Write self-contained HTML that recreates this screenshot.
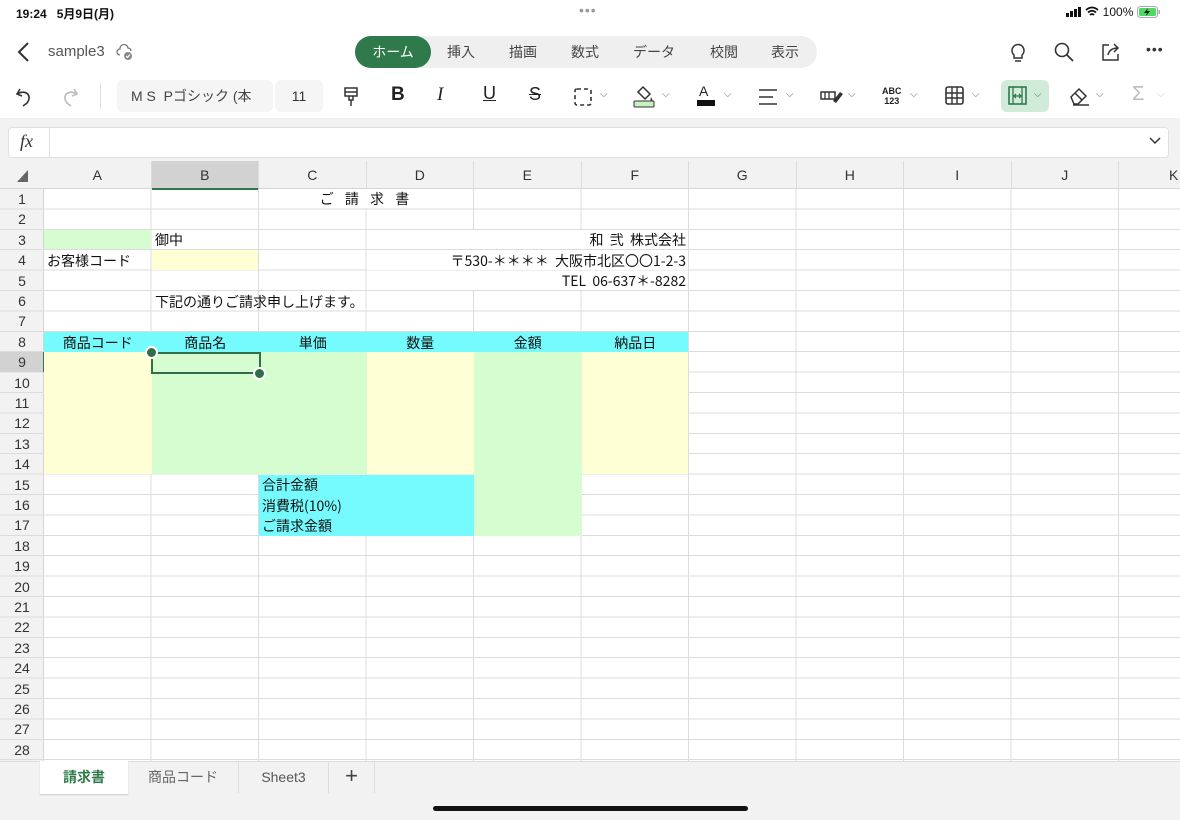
<!DOCTYPE html>
<html><head><meta charset="utf-8">
<style>
*{box-sizing:border-box;margin:0;padding:0}
body{width:1180px;height:820px;overflow:hidden;background:#fff;font-family:"Liberation Sans","Noto Sans CJK JP",sans-serif;position:relative;color:#222}
.a{position:absolute}
.tb{color:#444;font-size:14px}
.ic{position:absolute;top:80px}
.chev{position:absolute;font-size:10px;color:#666}
.cell{position:absolute;font-size:14px;line-height:20px;white-space:nowrap;color:#111;font-family:"Noto Sans CJK JP","Liberation Sans",sans-serif}
.rh{position:absolute;left:0;width:44px;font-size:14px;text-align:center;color:#333;line-height:20px}
.ch{position:absolute;top:161px;height:28px;line-height:28px;width:107.5px;text-align:center;font-size:14px;color:#333;border-right:1px solid #dcdcdc}
</style></head><body>
<!-- status bar -->
<div class="a" style="left:16px;top:5px;font-size:12px;font-weight:bold;color:#111">19:24&nbsp;&nbsp;&nbsp;5月9日(月)</div>
<div class="a" style="left:579px;top:2px;font-size:14px;color:#999;letter-spacing:1px">•••</div>
<div class="a" style="left:1066px;top:5px;font-size:12px;color:#111">
<svg width="16" height="10" style="vertical-align:-1px"><rect x="0" y="6" width="3" height="4" fill="#111"/><rect x="4" y="4" width="3" height="6" fill="#111"/><rect x="8" y="2" width="3" height="8" fill="#111"/><rect x="12" y="0" width="3" height="10" fill="#111"/></svg>
<svg width="14" height="11" style="vertical-align:-1px"><path d="M1 4Q7-1 13 4M3 6.5Q7 3 11 6.5M5 9Q7 7 9 9" stroke="#111" stroke-width="1.8" fill="none"/></svg>
100%
<svg width="24" height="12" style="vertical-align:-2px"><rect x="0.5" y="0.5" width="20" height="11" rx="3" fill="none" stroke="#aaa"/><rect x="2" y="2" width="17" height="8" rx="1.5" fill="#4cd964"/><rect x="21.5" y="4" width="1.5" height="4" fill="#aaa"/><path d="M11 2L7 7h3l-1 3 4-5h-3z" fill="#111"/></svg></div>
<!-- title row -->
<svg class="a" style="left:16px;top:41px" width="14" height="22"><path d="M12 2L3 11l9 9" stroke="#333" stroke-width="2" fill="none"/></svg>
<div class="a" style="left:48px;top:43px;font-size:15px;color:#555">sample3</div>
<svg class="a" style="left:116px;top:43px" width="18" height="18"><path d="M4 12a3 3 0 0 1 0-6 4 4 0 0 1 8-1 3 3 0 0 1 3 3" stroke="#777" stroke-width="1.3" fill="none"/><circle cx="12" cy="13" r="4" fill="#888"/><path d="M10 13l1.5 1.5 2.5-3" stroke="#fff" stroke-width="1.2" fill="none"/></svg>
<div class="a" style="left:355px;top:36px;width:462px;height:32px;border-radius:16px;background:#efefef"></div>
<div class="a" style="left:355px;top:36px;width:76px;height:32px;border-radius:16px;background:#2f7a4b;color:#fff;font-size:14px;text-align:center;line-height:32px">ホーム</div>
<div class="a tb" style="top:42px;left:447px">挿入</div>
<div class="a tb" style="top:42px;left:509px">描画</div>
<div class="a tb" style="top:42px;left:571px">数式</div>
<div class="a tb" style="top:42px;left:633px">データ</div>
<div class="a tb" style="top:42px;left:710px">校閲</div>
<div class="a tb" style="top:42px;left:771px">表示</div>
<svg class="a" style="left:1008px;top:40px" width="20" height="24"><path d="M6 15a6 6 0 1 1 8 0v3H6z" stroke="#333" stroke-width="1.5" fill="none"/><path d="M7 21h6" stroke="#333" stroke-width="1.5"/></svg>
<svg class="a" style="left:1053px;top:41px" width="22" height="22"><circle cx="9" cy="9" r="6.5" stroke="#333" stroke-width="1.6" fill="none"/><path d="M14 14l6 6" stroke="#333" stroke-width="1.8"/></svg>
<svg class="a" style="left:1100px;top:41px" width="22" height="22"><path d="M9 4H3v15h15v-6" stroke="#333" stroke-width="1.5" fill="none"/><path d="M8 14c1-5 5-7 10-7M14 3l4 4-4 4" stroke="#333" stroke-width="1.5" fill="none"/></svg>
<div class="a" style="left:1146px;top:41px;font-size:14px;color:#333;letter-spacing:1px">•••</div>
<!-- toolbar -->
<svg class="ic" style="left:14px;top:86px" width="22" height="22"><path d="M6 3L3 8l5 2" stroke="#333" stroke-width="1.6" fill="none"/><path d="M3 8c8-5 16 1 10 9l-4 3" stroke="#333" stroke-width="1.6" fill="none"/></svg>
<svg class="ic" style="left:58px;top:86px" width="22" height="22"><path d="M16 3l3 5-5 2" stroke="#bbb" stroke-width="1.6" fill="none"/><path d="M19 8c-8-5-16 1-10 9l4 3" stroke="#bbb" stroke-width="1.6" fill="none"/></svg>
<div class="a" style="left:100px;top:83px;width:1px;height:26px;background:#ddd"></div>
<div class="a" style="left:117px;top:80px;width:156px;height:32px;border-radius:6px;background:#f5f5f5;font-size:14px;color:#444;line-height:32px;padding-left:14px;overflow:hidden;white-space:nowrap">M S&nbsp;&nbsp;Pゴシック (本</div>
<div class="a" style="left:275px;top:80px;width:48px;height:32px;border-radius:6px;background:#f5f5f5;font-size:14px;color:#333;line-height:32px;text-align:center">11</div>
<svg class="ic" style="left:342px;top:86px" width="20" height="22"><path d="M3 2h12v8H3zM3 6h12M7 10v4h4v-4M9 14v6" stroke="#333" stroke-width="1.5" fill="none"/></svg>
<div class="a" style="left:391px;top:84px;font-size:19px;font-weight:bold;color:#222">B</div>
<div class="a" style="left:437px;top:84px;font-size:19px;font-family:'Liberation Serif',serif;font-style:italic;color:#222">I</div>
<div class="a" style="left:483px;top:83px;font-size:18px;color:#222;text-decoration:underline">U</div>
<div class="a" style="left:529px;top:84px;font-size:18px;color:#222;text-decoration:line-through">S</div>
<svg class="ic" style="left:573px;top:87px" width="20" height="20"><rect x="2" y="2" width="16" height="16" rx="2" stroke="#333" stroke-width="1.6" fill="none" stroke-dasharray="4 3"/></svg>
<div class="chev" style="left:600px;top:89px">⌵</div>
<svg class="ic" style="left:633px;top:84px" width="24" height="24"><path d="M10 3l7 7-5 5-7-7z" stroke="#333" stroke-width="1.5" fill="none"/><path d="M18 13c1 2 2 3 1 4s-2-1-1-4" fill="#333"/><rect x="1" y="17" width="20" height="6" rx="1" fill="#c9f1c3" stroke="#333" stroke-width="1"/></svg>
<div class="chev" style="left:662px;top:89px">⌵</div>
<div class="a" style="left:699px;top:83px;font-size:14px;color:#222">A</div>
<div class="a" style="left:697px;top:100px;width:18px;height:6px;background:#111"></div>
<div class="chev" style="left:724px;top:89px">⌵</div>
<svg class="ic" style="left:758px;top:87px" width="22" height="20"><path d="M1 3h18M1 10h14M1 17h18" stroke="#333" stroke-width="1.5"/></svg>
<div class="chev" style="left:786px;top:89px">⌵</div>
<svg class="ic" style="left:820px;top:86px" width="24" height="20"><rect x="1" y="6" width="14" height="7" stroke="#333" stroke-width="1.5" fill="none"/><path d="M5 6v7M9 6v7" stroke="#333" stroke-width="1.3"/><path d="M13 15l7-9 3 2-7 9z" fill="#333"/></svg>
<div class="chev" style="left:848px;top:89px">⌵</div>
<div class="a" style="left:882px;top:86px;font-size:9px;font-weight:bold;line-height:10px;color:#222;text-align:center">ABC<br>123</div>
<div class="chev" style="left:910px;top:89px">⌵</div>
<svg class="ic" style="left:945px;top:86px" width="20" height="20"><rect x="1" y="1" width="17" height="17" rx="2" stroke="#333" stroke-width="1.6" fill="none"/><path d="M7 1v17M12 1v17M1 7h17M1 12h17" stroke="#333" stroke-width="1.4"/></svg>
<div class="chev" style="left:972px;top:89px">⌵</div>
<div class="a" style="left:1001px;top:80px;width:48px;height:32px;border-radius:6px;background:#d1ebd9"></div>
<svg class="ic" style="left:1008px;top:86px" width="20" height="20"><rect x="1" y="1" width="17" height="17" stroke="#2f7a4b" stroke-width="1.6" fill="none"/><path d="M5 1v17M14 1v17M6 10h7M8 8l-2 2 2 2M11 8l2 2-2 2" stroke="#2f7a4b" stroke-width="1.3" fill="none"/></svg>
<div class="chev" style="left:1034px;top:89px;color:#2f7a4b">⌵</div>
<svg class="ic" style="left:1068px;top:84px" width="24" height="24"><path d="M3 13l8-8 7 7-8 8H6z" stroke="#333" stroke-width="1.5" fill="none"/><path d="M7 9l7 7M5 21h16" stroke="#333" stroke-width="1.5"/></svg>
<div class="chev" style="left:1096px;top:89px">⌵</div>
<div class="a" style="left:1132px;top:83px;font-size:20px;color:#bbb">Σ</div>
<div class="chev" style="left:1157px;top:89px;color:#ccc">⌵</div>
<!-- gray area and formula bar -->
<div class="a" style="left:0;top:118px;width:1180px;height:43px;background:#f2f2f2"></div>
<div class="a" style="left:8px;top:127px;width:1161px;height:31px;background:#fff;border:1px solid #e0e0e0;border-radius:4px"></div>
<div class="a" style="left:49px;top:128px;width:1px;height:29px;background:#e0e0e0"></div>
<div class="a" style="left:20px;top:131px;font-family:'Liberation Serif',serif;font-style:italic;font-size:18px;color:#333">fx</div>
<svg class="a" style="left:1148px;top:135px" width="14" height="12"><path d="M2 3l5 5 5-5" stroke="#333" stroke-width="1.5" fill="none"/></svg>
<!-- headers -->
<div class="a" style="left:0;top:161px;width:1180px;height:28px;background:#f2f2f2;border-bottom:1px solid #d5d5d5"></div>
<div class="a" style="left:0;top:189px;width:44px;height:572px;background:#f2f2f2;border-right:1px solid #d5d5d5"></div>
<svg class="a" style="left:16px;top:169px" width="14" height="14"><path d="M12 1v12H1z" fill="#666"/></svg>
<div class="ch" style="left:44px">A</div>
<div class="ch" style="left:151.5px;background:#d2d2d2;border-bottom:2px solid #2f7a4b;height:29px">B</div>
<div class="ch" style="left:259px">C</div>
<div class="ch" style="left:366.5px">D</div>
<div class="ch" style="left:474px">E</div>
<div class="ch" style="left:581.5px">F</div>
<div class="ch" style="left:689px">G</div>
<div class="ch" style="left:796.5px">H</div>
<div class="ch" style="left:904px">I</div>
<div class="ch" style="left:1011.5px">J</div>
<div class="ch" style="left:1119px;text-align:left;padding-left:50px">K</div>
<!-- grid -->
<div class="a" style="left:44px;top:189px;width:1136px;height:572px;background:repeating-linear-gradient(to right,transparent 0 106.5px,#dcdcdc 106.5px 107.5px),repeating-linear-gradient(to bottom,transparent 0 19.4px,#dcdcdc 19.4px 20.4px)"></div>
<!-- row headers -->
<div class="a" style="left:0;top:189px;width:44px;height:572px;background:repeating-linear-gradient(to bottom,transparent 0 19.4px,#dcdcdc 19.4px 20.4px)"></div>
<div class="a" style="left:0;top:352.2px;width:44px;height:19.4px;background:#d2d2d2"></div>
<div class="a" style="left:43px;top:352.2px;width:2px;height:20px;background:#2f7a4b"></div>
<div class="rh" style="top:189px">1</div><div class="rh" style="top:209.4px">2</div><div class="rh" style="top:229.8px">3</div><div class="rh" style="top:250.2px">4</div><div class="rh" style="top:270.6px">5</div><div class="rh" style="top:291px">6</div><div class="rh" style="top:311.4px">7</div><div class="rh" style="top:331.8px">8</div><div class="rh" style="top:352.2px">9</div><div class="rh" style="top:372.6px">10</div><div class="rh" style="top:393px">11</div><div class="rh" style="top:413.4px">12</div><div class="rh" style="top:433.8px">13</div><div class="rh" style="top:454.2px">14</div><div class="rh" style="top:474.6px">15</div><div class="rh" style="top:495px">16</div><div class="rh" style="top:515.4px">17</div><div class="rh" style="top:535.8px">18</div><div class="rh" style="top:556.2px">19</div><div class="rh" style="top:576.6px">20</div><div class="rh" style="top:597px">21</div><div class="rh" style="top:617.4px">22</div><div class="rh" style="top:637.8px">23</div><div class="rh" style="top:658.2px">24</div><div class="rh" style="top:678.6px">25</div><div class="rh" style="top:699px">26</div><div class="rh" style="top:719.4px">27</div><div class="rh" style="top:739.8px">28</div>
<!-- merges (white) -->
<div class="a" style="left:259px;top:189px;width:214px;height:19.4px;background:#fff"></div>
<div class="a" style="left:366.5px;top:229.8px;width:321.5px;height:19.4px;background:#fff"></div>
<div class="a" style="left:366.5px;top:250.2px;width:321.5px;height:19.4px;background:#fff"></div>
<div class="a" style="left:366.5px;top:270.6px;width:321.5px;height:19.4px;background:#fff"></div>
<!-- fills -->
<div class="a" style="left:44px;top:229.8px;width:106.5px;height:19.4px;background:#d6fdd0"></div>
<div class="a" style="left:151.5px;top:250.2px;width:106.5px;height:19.4px;background:#ffffd6"></div>
<div class="a" style="left:44px;top:331.8px;width:644px;height:20.4px;background:#75fbfd"></div>
<div class="a" style="left:44px;top:352.2px;width:107.5px;height:122px;background:#ffffd6"></div>
<div class="a" style="left:151.5px;top:352.2px;width:215px;height:122px;background:#d6fdd0"></div>
<div class="a" style="left:366.5px;top:352.2px;width:107.5px;height:122px;background:#ffffd6"></div>
<div class="a" style="left:474px;top:352.2px;width:107.5px;height:184px;background:#d6fdd0"></div>
<div class="a" style="left:581.5px;top:352.2px;width:106.5px;height:122px;background:#ffffd6"></div>
<div class="a" style="left:259px;top:474.6px;width:215px;height:61.2px;background:#75fbfd"></div>
<!-- text -->
<div class="cell" style="left:259px;top:189px;width:215px;text-align:center;letter-spacing:4px">ご 請 求 書</div>
<div class="cell" style="left:155px;top:230px">御中</div>
<div class="cell" style="left:47px;top:250.5px">お客様コード</div>
<div class="cell" style="left:366px;top:230px;width:320px;text-align:right">和&nbsp;&nbsp;弐&nbsp;&nbsp;株式会社</div>
<div class="cell" style="left:366px;top:250.5px;width:320px;text-align:right">〒530-＊＊＊＊&nbsp;&nbsp;大阪市北区〇〇1-2-3</div>
<div class="cell" style="left:366px;top:271px;width:320px;text-align:right">TEL&nbsp;&nbsp;06-637＊-8282</div>
<div class="cell" style="left:155px;top:291.5px">下記の通りご請求申し上げます。</div>
<div class="cell" style="left:44px;top:332.5px;width:107.5px;text-align:center">商品コード</div>
<div class="cell" style="left:151.5px;top:332.5px;width:107.5px;text-align:center">商品名</div>
<div class="cell" style="left:259px;top:332.5px;width:107.5px;text-align:center">単価</div>
<div class="cell" style="left:366.5px;top:332.5px;width:107.5px;text-align:center">数量</div>
<div class="cell" style="left:474px;top:332.5px;width:107.5px;text-align:center">金額</div>
<div class="cell" style="left:581.5px;top:332.5px;width:107.5px;text-align:center">納品日</div>
<div class="cell" style="left:262px;top:475px">合計金額</div>
<div class="cell" style="left:262px;top:495.5px">消費税(10%)</div>
<div class="cell" style="left:262px;top:516px">ご請求金額</div>
<!-- selection -->
<div class="a" style="left:151px;top:352px;width:110px;height:22px;border:2px solid #2f6e47"></div>
<div class="a" style="left:145px;top:346px;width:13px;height:13px;border-radius:50%;background:#2f6e47;border:2px solid #fff"></div>
<div class="a" style="left:253px;top:367px;width:13px;height:13px;border-radius:50%;background:#2f6e47;border:2px solid #fff"></div>
<!-- sheet tabs -->
<div class="a" style="left:0;top:761px;width:1180px;height:59px;background:#f2f2f2;border-top:1px solid #ddd"></div>
<div class="a" style="left:40px;top:761px;width:88px;height:33px;background:#fff;color:#2f7a4b;font-size:14px;font-weight:bold;text-align:center;line-height:32px;box-shadow:0 1px 1px #ccc">請求書</div>
<div class="a" style="left:128px;top:761px;width:111px;height:32px;border-right:1px solid #ddd;color:#666;font-size:14px;text-align:center;line-height:32px">商品コード</div>
<div class="a" style="left:239px;top:761px;width:90px;height:32px;border-right:1px solid #ddd;color:#555;font-size:14px;text-align:center;line-height:32px">Sheet3</div>
<div class="a" style="left:329px;top:761px;width:46px;height:32px;border-right:1px solid #ddd;color:#444;font-size:22px;text-align:center;line-height:30px">+</div>
<div class="a" style="left:433px;top:806px;width:315px;height:5px;border-radius:3px;background:#111"></div>
</body></html>
